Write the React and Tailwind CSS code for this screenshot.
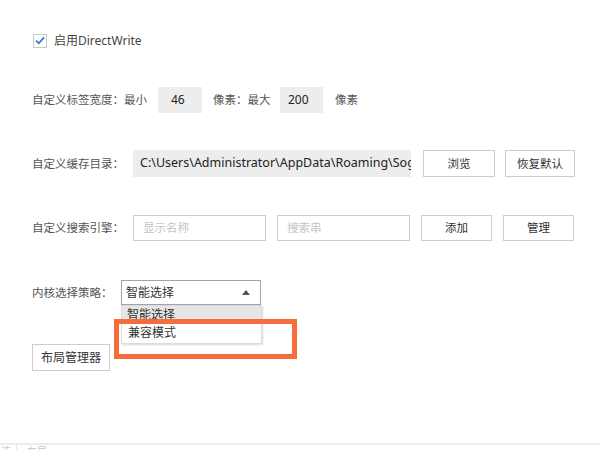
import React from 'react'

const font = { fontFamily: '"Noto Sans", "Noto Sans CJK SC", sans-serif' }

function Btn({ w, children }) {
    return (
        <div className={`h-full ${w} flex items-center justify-center border border-[#cdcdcd] bg-white text-[#333]`}>
            {children}
        </div>
    )
}

export default function App() {
    return (
        <div className="relative w-[600px] h-[450px] bg-white flex flex-col text-[11.5px] text-[#555] overflow-hidden" style={font}>
            <div className="flex flex-col pl-[32px] pt-[27px]">
                {/* directwrite */}
                <div className="h-[27px] flex items-center">
                    <div className="ml-[1px] w-[14px] h-[14px] border border-[#c9c9c9] bg-white flex items-center justify-center">
                        <svg width="10" height="9" viewBox="0 0 10 9">
                            <path d="M1 4.6 L3.8 7.3 L9 1.4" fill="none" stroke="#2b7de0" strokeWidth="1.8" />
                        </svg>
                    </div>
                    <span className="ml-[7px] text-[12px] text-[#444]">启用DirectWrite</span>
                </div>

                {/* tab width */}
                <div className="mt-[33px] h-[26px] flex items-center whitespace-nowrap">
                    <span className="w-[92px]">自定义标签宽度：</span>
                    <span className="w-[34px]">最小</span>
                    <div className="w-[44px] h-full bg-[#ededed] flex items-center pl-[13px] text-[12px] text-[#222]">46</div>
                    <span className="ml-[11px] w-[67px]">像素：最大</span>
                    <div className="w-[43px] h-full bg-[#ededed] flex items-center pl-[8px] text-[12px] text-[#222]">200</div>
                    <span className="ml-[12px]">像素</span>
                </div>

                {/* cache dir */}
                <div className="mt-[37px] h-[27px] flex items-center whitespace-nowrap">
                    <span className="w-[101px]">自定义缓存目录：</span>
                    <div className="w-[278px] h-full bg-[#ededed] flex items-center pl-[7px] overflow-hidden text-[12.5px] text-[#222]">
                        C:\Users\Administrator\AppData\Roaming\Sogou
                    </div>
                    <div className="ml-[12px] h-full"><Btn w="w-[72px]">浏览</Btn></div>
                    <div className="ml-[10px] h-full"><Btn w="w-[70px]">恢复默认</Btn></div>
                </div>

                {/* search engine */}
                <div className="mt-[38px] h-[26px] flex items-center whitespace-nowrap">
                    <span className="w-[101px]">自定义搜索引擎：</span>
                    <div className="w-[133px] h-full border border-[#cdcdcd] flex items-center pl-[9px] text-[#c4c4c4]">显示名称</div>
                    <div className="ml-[11px] w-[133px] h-full border border-[#cdcdcd] flex items-center pl-[9px] text-[#c4c4c4]">搜索串</div>
                    <div className="ml-[11px] h-full"><Btn w="w-[71px]">添加</Btn></div>
                    <div className="ml-[11px] h-full"><Btn w="w-[71px]">管理</Btn></div>
                </div>

                {/* kernel */}
                <div className="mt-[39px] h-[25px] flex items-center whitespace-nowrap">
                    <span className="w-[89px]">内核选择策略：</span>
                    <div className="relative w-[140px] h-full">
                        <div className="h-full border border-[#a5a5a5] bg-white flex items-center justify-between pl-[4px] pr-[10px] text-[12px] text-[#333]">
                            <span>智能选择</span>
                            <svg width="8" height="5" viewBox="0 0 8 5">
                                <path d="M0 5 L4 0 L8 5 Z" fill="#555" />
                            </svg>
                        </div>
                        <div className="absolute left-0 top-full w-[141px] bg-white border border-[#dcdcdc] shadow-[1px_1px_2px_rgba(0,0,0,0.15)] text-[12px] text-[#333]">
                            <div className="h-[16px] bg-[#e6e6e6] pl-[5px] pt-[1px] leading-[16px] overflow-hidden">智能选择</div>
                            <div className="h-[21px] pl-[6px] flex items-center">兼容模式</div>
                        </div>
                    </div>
                </div>

                <div className="mt-[39px] h-[27px] flex text-[12px]">
                    <Btn w="w-[78px]">布局管理器</Btn>
                </div>
            </div>

            {/* bottom strip */}
            <div className="mt-auto h-[7px] border-t-2 border-[#ececec] flex text-[10px] text-[#c8c8c8] leading-[12px] overflow-hidden">
                <div className="w-[17px] border-r border-[#e4e4e4] pl-[1px]">选</div>
                <div className="pl-[10px]">布局</div>
            </div>

            {/* highlight */}
            <div className="absolute left-[114px] top-[319px] w-[183px] h-[40px] border-[5px] border-[#f56d3b]"></div>
        </div>
    )
}
